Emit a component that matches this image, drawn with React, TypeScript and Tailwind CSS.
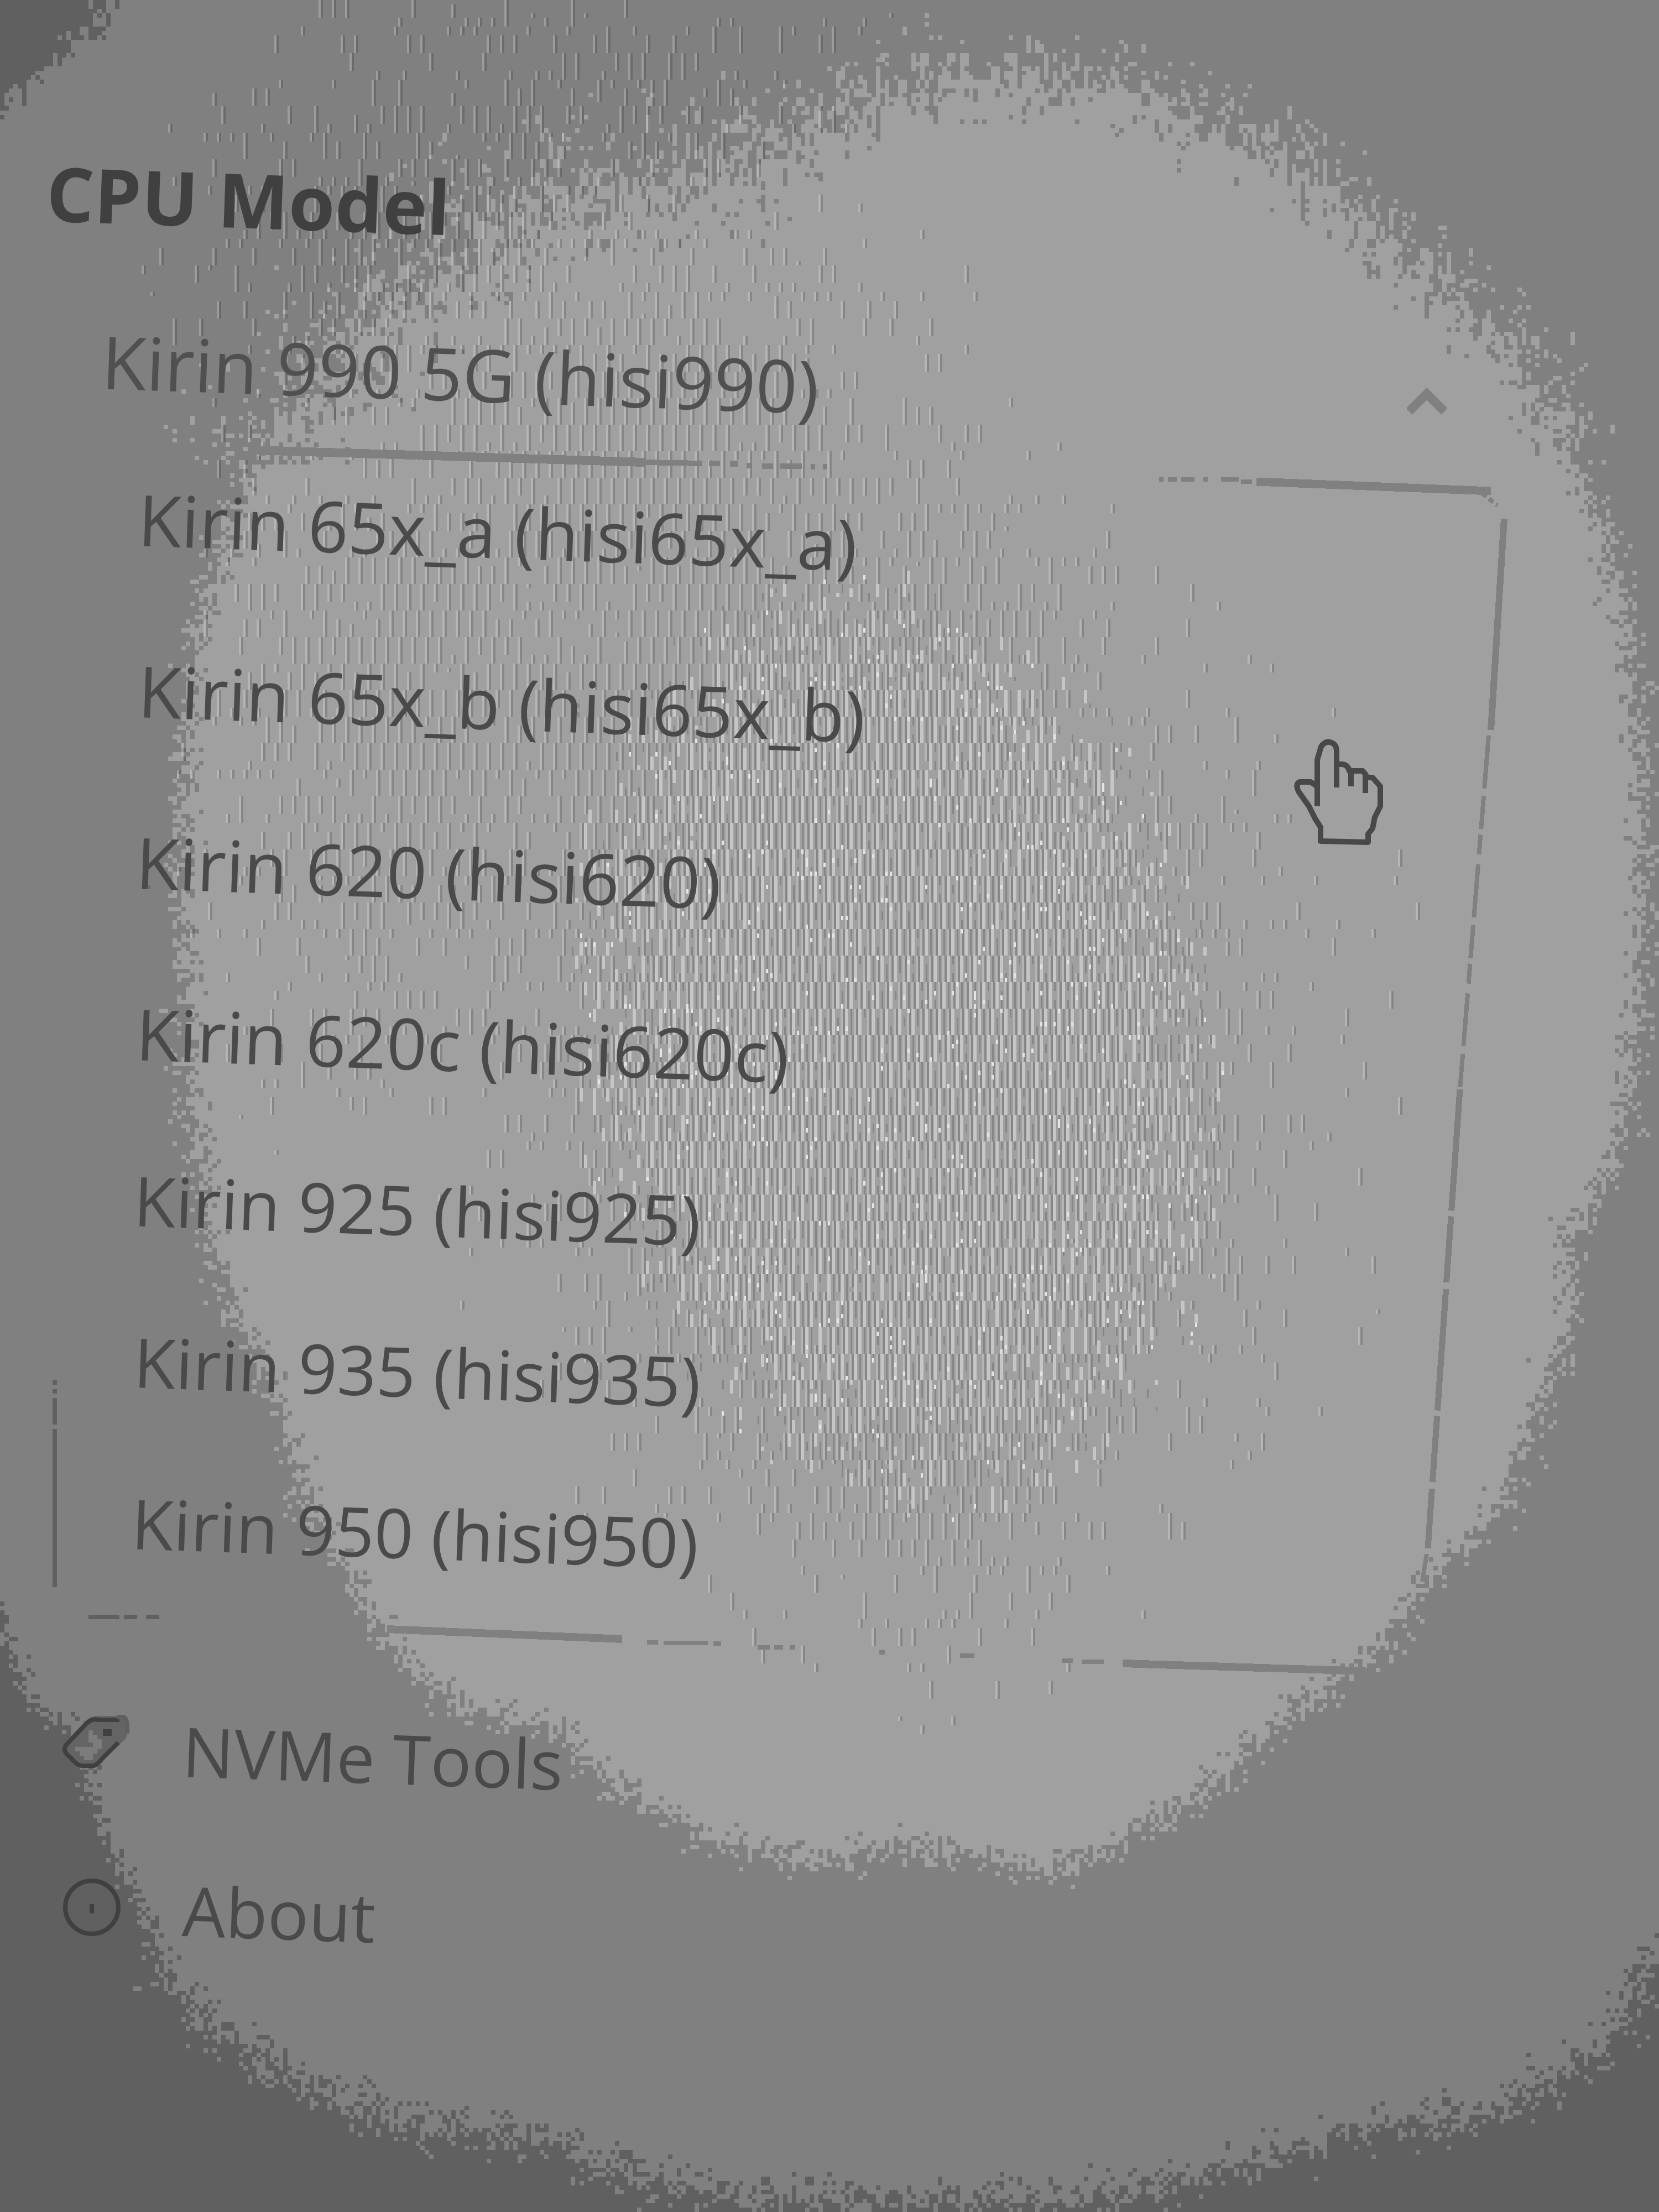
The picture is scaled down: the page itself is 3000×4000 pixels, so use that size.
import { useMemo } from "react";

type Point = [number, number];

const MODELS = [
  { label: "Kirin 65x_a (hisi65x_a)", row: "h-[310px] pl-[250px] text-[128px]" },
  { label: "Kirin 65x_b (hisi65x_b)", row: "h-[310px] pl-[250px] text-[128px]" },
  { label: "Kirin 620 (hisi620)", row: "h-[310px] pl-[246px] text-[128px]" },
  { label: "Kirin 620c (hisi620c)", row: "h-[310px] pl-[246px] text-[128px]" },
  { label: "Kirin 925 (hisi925)", row: "h-[292px] pl-[242px] text-[124px]" },
  { label: "Kirin 935 (hisi935)", row: "h-[292px] pl-[242px] text-[124px]" },
  { label: "Kirin 950 (hisi950)", row: "h-[292px] pl-[238px] text-[124px]" },
];

const S = 3000 / 1176;

// Edge of the bright pool of light and of the mid-grey area around it.
const LIGHT: Point[] = [
  [640, 58], [700, 52], [760, 54], [830, 72], [890, 100], [945, 130], [985, 172], [1030, 205], [1070, 240], [1100, 290],
  [1122, 340], [1142, 390], [1158, 460], [1165, 560], [1166, 680], [1154, 790], [1136, 840], [1110, 880], [1115, 930], [1092, 1000],
  [1060, 1080], [1012, 1115], [980, 1172], [925, 1208], [850, 1270], [785, 1312], [740, 1328], [690, 1316], [640, 1308],
  [600, 1320], [520, 1312], [440, 1268], [390, 1225], [335, 1215], [285, 1180], [250, 1130], [215, 1060], [197, 990],
  [165, 930], [150, 880], [134, 780], [130, 680], [130, 560], [137, 460], [160, 380], [180, 325], [210, 300], [250, 235],
  [320, 180], [350, 150], [430, 128], [530, 118], [590, 84],
];
const MID: Point[] = [
  [-20, 90], [0, 78], [30, 52], [70, 14], [90, -20], [1200, -20], [1200, 1350], [1165, 1400], [1140, 1450], [1060, 1498],
  [960, 1512], [850, 1545], [760, 1562], [560, 1562], [450, 1545], [400, 1520], [300, 1510], [220, 1480], [150, 1440],
  [110, 1385], [90, 1330], [66, 1285], [62, 1235], [20, 1205], [2, 1150], [-20, 1120],
];

// [x, y, radiusX, radiusY, strength] of the patches of vertical moire lines.
const LINES = [
  [310, 160, 140, 110, 0.75], [420, 50, 160, 90, 0.5], [440, 320, 180, 150, 0.85], [300, 520, 130, 220, 0.75],
  [520, 540, 190, 210, 1], [640, 480, 130, 130, 0.8], [640, 740, 220, 250, 1.1], [650, 980, 130, 150, 0.9],
];

const noise = (x: number, y: number, k: number) => {
  let h = (Math.imul(x, 374761393) + Math.imul(y, 668265263) + Math.imul(k, 974634777)) | 0;
  h = Math.imul(h ^ (h >>> 13), 1274126177);
  h = Math.imul(h ^ (h >>> 15), 2246822519);
  return ((h ^ (h >>> 16)) >>> 0) / 4294967296;
};

const crossings = (poly: Point[], y: number) => {
  const xs: number[] = [];
  poly.forEach(([x1, y1], i) => {
    const [x2, y2] = poly[(i + 1) % poly.length];
    if (y1 > y !== y2 > y) xs.push(x1 + ((y - y1) / (y2 - y1)) * (x2 - x1));
  });
  return xs.sort((a, b) => a - b);
};

const inside = (xs: number[], x: number) => {
  let hit = false;
  for (const v of xs) if (v < x) hit = !hit;
  return hit;
};

// An area filled in 8px cells whose edge scatters by a random amount.
const grainyArea = (poly: Point[], spread: (x: number, y: number) => number) => {
  const table: number[][] = [];
  for (let y = 0; y < 1569; y++) table.push(crossings(poly, y + 0.5));
  const out: string[] = [];
  for (let r = 0; r < 500; r++) {
    let start = -1;
    for (let c = 0; c <= 375; c++) {
      let on = false;
      if (c < 375) {
        const x = (c * 8 + 4) / S;
        const y = (r * 8 + 4) / S;
        const s = spread(x, y);
        const tall = y < 330 ? 3 : 1;
        const dx = (noise(c, Math.floor(r / tall), 1) + noise(c, r, 2) - 1) * s;
        const dy = (noise(c, Math.floor(r / tall), 3) + noise(c, r >> 1, 4) - 1) * s;
        const line = Math.min(1568, Math.max(0, Math.round(y + dy)));
        on = inside(table[line], x + dx);
      }
      if (on && start < 0) start = c;
      if (!on && start >= 0) {
        out.push(`M${start * 8} ${r * 8}H${c * 8}v8H${start * 8}z`);
        start = -1;
      }
    }
  }
  return out.join("");
};

const moire = () => {
  const pale: string[] = [];
  const dark: string[] = [];
  const bright: string[] = [];
  const white: string[] = [];
  for (let r = 0; r < 500; r++) {
    for (let c = 0; c < 375; c++) {
      const x = (c * 8) / S;
      const y = (r * 8) / S;
      let d = 0;
      for (const [cx, cy, rx, ry, k] of LINES) {
        const q = ((x - cx) / rx) ** 2 + ((y - cy) / ry) ** 2;
        if (q < 3) d = Math.max(d, k * Math.exp(-q));
      }
      if (d < 0.06) continue;
      const phase = (c + Math.floor(r / 6)) % 3;
      const X = c * 8;
      const Y = r * 8;
      if (phase === 0 && noise(c, Math.floor(r / 4), 5) < d * 1.3 - 0.05) {
        pale.push(`M${X} ${Y}h4v8h-4z`);
        dark.push(`M${X + 4} ${Y}h4v8h-4z`);
      }
      const q = ((x - 635 - (y - 740) * 0.1) / 235) ** 2 + ((y - 740) / 335) ** 2;
      if (q < 1.05) {
        const b = Math.min(1, (1.05 - q) * 1.8);
        if (phase === 1 && noise(c, Math.floor(r / 3), 6) < b) bright.push(`M${X} ${Y}h6v8h-6z`);
        if (phase === 2 && noise(c, Math.floor(r / 2), 7) < b * 0.7) dark.push(`M${X + 2} ${Y}h3v8h-3z`);
        if (noise(c, r, 8) < b * 0.03) white.push(`M${X + 1} ${Y}h4v8h-4z`);
      }
    }
  }
  return { pale: pale.join(""), dark: dark.join(""), bright: bright.join(""), white: white.join("") };
};

function Glow() {
  const art = useMemo(
    () => ({
      mid: grainyArea(MID, (x, y) => (y > 1380 ? 26 : 14)),
      light: grainyArea(LIGHT, (x, y) => (y < 330 ? (x < 560 ? 75 : 44) : 20)),
      ...moire(),
    }),
    [],
  );
  return (
    <svg
      aria-hidden="true"
      viewBox="0 0 3000 4000"
      preserveAspectRatio="none"
      shapeRendering="crispEdges"
      className="pointer-events-none absolute inset-0 h-full w-full"
    >
      <path d={art.mid} fill="#808080" />
      <path d={art.light} fill="#a0a0a0" />
      <path d={art.pale} fill="#ffffff" fillOpacity="0.22" />
      <path d={art.dark} fill="#000000" fillOpacity="0.16" />
      <path d={art.bright} fill="#c6c6c6" />
      <path d={art.white} fill="#e4e4e4" />
    </svg>
  );
}

// Faint, partly broken outline of the open list, seen at an angle.
function ListOutline() {
  return (
    <svg
      aria-hidden="true"
      viewBox="0 783 3000 2116"
      preserveAspectRatio="none"
      shapeRendering="crispEdges"
      className="pointer-events-none absolute inset-0 h-full w-full overflow-visible"
      fill="none"
      stroke="#808080"
    >
      <path d="M460 814L1165 836" strokeWidth="16" />
      <path d="M1165 836L1270 838M1282 838h20M1320 839h14M1350 842h10M1378 843h20M1410 843h40M1466 844h8M1488 844h8" strokeWidth="10" />
      <path d="M2096 867h8M2112 867h16M2136 867h24M2176 867h8M2208 867h32M2244 871h20" strokeWidth="8" />
      <path d="M2272 871L2696 888" strokeWidth="15" />
      <path d="M2680 892L2708 914" strokeWidth="8" strokeDasharray="10 6" />
      <path d="M2720 938L2696 1320" strokeWidth="12" />
      <path d="M2692 1330L2640 1970" strokeWidth="8" strokeDasharray="96 14 60 10 36 18" />
      <path d="M2640 1970L2582 2800" strokeWidth="11" strokeDasharray="220 10 120 12" />
      <path d="M2580 2810L2572 2860" strokeWidth="8" />
      <path d="M700 2946L1125 2964" strokeWidth="14" />
      <path d="M1170 2970h20M1200 2971h80M1290 2972h14M1370 2979h22M1400 2979h16M1428 2979h10M1590 2988h10M1736 2994h26" strokeWidth="8" />
      <path d="M1920 3003h20M1956 3005h40" strokeWidth="8" />
      <path d="M2030 3008L2470 3022" strokeWidth="14" />
      <path d="M99 2496v8M99 2512v8M99 2528v48M99 2584v286" stroke="#606060" strokeWidth="8" />
      <path d="M160 2924h56M224 2924h24M264 2924h24" stroke="#606060" strokeWidth="8" />
    </svg>
  );
}

function Chevron() {
  return (
    <svg aria-hidden="true" viewBox="0 0 72 56" className="pointer-events-none h-[56px] w-[72px]" fill="none" stroke="#808080" strokeWidth="16">
      <path d="M4 46L36 14L68 46" />
    </svg>
  );
}

function TagIcon() {
  return (
    <svg aria-hidden="true" viewBox="0 0 124 104" className="mb-8 h-[104px] w-[124px] shrink-0" fill="none" stroke="#404040" strokeWidth="8">
      <path d="M4 56L44 14Q52 6 64 6H98Q118 8 118 24V40Q116 48 108 54L68 90Q58 98 44 96H28Q20 92 4 72Z" fill="#646464" stroke="none" />
      <path d="M48 32H56V40H64V48H72V66H64V74H56V86H40V78H32V70H24V62H56V54H48Z" fill="#7c7c7c" stroke="none" />
      <path d="M104 13H66Q54 10 44 20L8 58Q2 66 8 74L24 90Q32 98 44 96H58Q66 92 72 84L102 54" />
      <path d="M74 36h16" strokeWidth="12" />
      <path d="M100 8H112Q118 12 118 24V38" stroke="#606060" />
    </svg>
  );
}

function InfoIcon() {
  return (
    <svg aria-hidden="true" viewBox="0 0 108 108" className="mr-4 mb-2 h-[108px] w-[108px] shrink-0" fill="none" stroke="#404040" strokeWidth="8">
      <circle cx="54" cy="54" r="48" />
      <path d="M54 48v17" />
    </svg>
  );
}

function HandPointer() {
  return (
    <svg
      aria-hidden="true"
      viewBox="0 0 168 196"
      className="pointer-events-none absolute top-[1334px] left-[78%] h-[196px] w-[168px]"
      stroke="#484848"
      strokeWidth="10"
      strokeLinejoin="round"
    >
      <path
        fill="#a0a0a0"
        d="M48 187V162L38 146L27 124L8 97Q2 84 10 80H30L42 88V40L49 16Q57 4 68 9Q76 12 77 22V48H88Q98 50 100 60H124Q130 66 132 72H142L156 88V124L146 144L142 164L134 174V189Z"
      />
      <path fill="none" d="M42 84V124M77 46V90M103 58V88M129 68V100" />
    </svg>
  );
}

export default function App() {
  return (
    <div className="relative min-h-screen w-full overflow-hidden bg-[#606060] font-['Open_Sans','Noto_Sans',sans-serif] text-[128px] text-[#4a4a4a]">
      <Glow />
      <main className="relative flex flex-col pt-[268px]">
        <h1 id="cpu-model" className="ml-[84px] h-[160px] origin-left rotate-2 self-start text-[136px] leading-[160px] font-bold whitespace-nowrap text-[#404040]">
          CPU Model
        </h1>

        <div className="mt-[124px] flex h-[200px] items-center justify-between pr-[384px] pl-[184px]">
          <select
            aria-labelledby="cpu-model"
            defaultValue="hisi990"
            className="h-[200px] w-[2000px] origin-left rotate-2 appearance-none bg-transparent text-[132px] leading-[200px] font-medium text-[#505050] outline-none"
          >
            <option value="hisi990">Kirin 990 5G (hisi990)</option>
            {MODELS.map(({ label }) => (
              <option key={label}>{label}</option>
            ))}
          </select>
          <span className="mt-[148px]">
            <Chevron />
          </span>
        </div>

        <section aria-label="CPU models" className="relative mt-[31px]">
          <ListOutline />
          <ul className="relative flex flex-col">
            {MODELS.map(({ label, row }) => (
              <li key={label} className={`flex items-center ${row}`}>
                <button type="button" className="origin-left rotate-2 leading-[176px] font-medium whitespace-nowrap">
                  {label}
                </button>
              </li>
            ))}
          </ul>
        </section>

        <nav aria-label="More" className="mt-[122px] flex flex-col pl-[112px] text-[124px]">
          <a href="#nvme-tools" className="flex h-[288px] items-center gap-[94px]">
            <TagIcon />
            <span className="origin-left rotate-2 leading-[176px] font-medium whitespace-nowrap">NVMe Tools</span>
          </a>
          <a href="#about" className="flex h-[288px] items-center gap-[94px]">
            <InfoIcon />
            <span className="origin-left rotate-2 leading-[176px] font-medium whitespace-nowrap">About</span>
          </a>
        </nav>
      </main>
      <HandPointer />
    </div>
  );
}
